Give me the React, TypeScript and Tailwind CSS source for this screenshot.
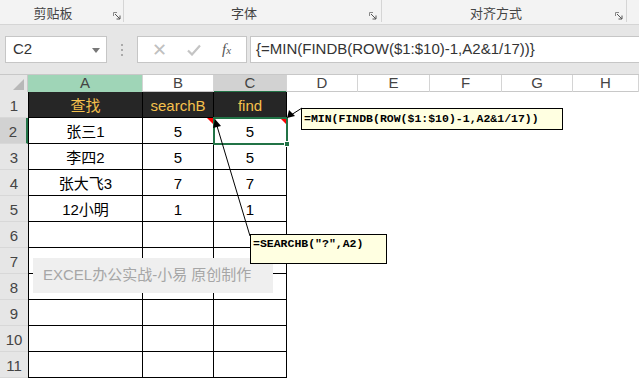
const ROWS = [
  ["查找", "searchB", "find"],
  ["张三1", "5", "5"],
  ["李四2", "5", "5"],
  ["张大飞3", "7", "7"],
  ["12小明", "1", "1"],
  ["", "", ""],
  ["", "", ""],
  ["", "", ""],
  ["", "", ""],
  ["", "", ""],
  ["", "", ""],
];

const COLS = ["A", "B", "C", "D", "E", "F", "G", "H"];

function Launcher() {
  return (
    <svg width="8" height="8" viewBox="0 0 8 8">
      <path d="M0.5 0.5H4M0.5 0.5V4" stroke="#888" strokeWidth="1" fill="none" />
      <path d="M2 2L7 7M7 3.5V7H3.5" stroke="#555" strokeWidth="1" fill="none" />
    </svg>
  );
}

function Ribbon() {
  return (
    <div className="flex h-[25px] border-b border-[#d5d5d5] bg-[#f3f3f3] text-[13px] text-[#444]">
      <div className="flex w-[124px] items-end">
        <div className="w-[106px] pb-px text-center">剪贴板</div>
        <div className="flex w-[17px] pb-[4px] pl-[7px]">
          <Launcher />
        </div>
        <div className="h-[22px] w-px self-start bg-[#d5d5d5]" />
      </div>
      <div className="flex w-[258px] items-end">
        <div className="w-[240px] pb-px text-center">字体</div>
        <div className="flex w-[17px] pb-[4px] pl-[5px]">
          <Launcher />
        </div>
        <div className="h-[22px] w-px self-start bg-[#d5d5d5]" />
      </div>
      <div className="flex w-[245px] items-end">
        <div className="w-[228px] pb-px text-center">对齐方式</div>
        <div className="flex w-[16px] pb-[4px] pl-[5px]">
          <Launcher />
        </div>
        <div className="h-[22px] w-px self-start bg-[#d5d5d5]" />
      </div>
    </div>
  );
}

function FormulaBar() {
  return (
    <div className="flex h-[49px] items-start bg-[#e6e6e6] pt-[11px]">
      <div className="ml-[5px] flex h-[27px] w-[102px] items-center justify-between border border-[#c6c6c6] bg-white pl-[7px] pr-[6px] text-[15px] text-[#333]">
        <span>C2</span>
        <span className="mt-[2px] border-x-[4px] border-t-[5px] border-x-transparent border-t-[#777]" />
      </div>
      <div className="flex w-[30px] flex-col items-center gap-[3px] pt-[8px]">
        <span className="size-[2px] bg-[#aaa]" />
        <span className="size-[2px] bg-[#aaa]" />
        <span className="size-[2px] bg-[#aaa]" />
      </div>
      <div className="flex h-[27px] w-[110px] items-center border border-[#c6c6c6] bg-white text-[#c0c0c0]">
        <span className="ml-[14px] text-[18px] leading-none">✕</span>
        <svg width="14" height="12" viewBox="0 0 14 12" className="ml-[20px]">
          <path d="M1 6.5L5 10.5L13 1.5" stroke="#c4c4c4" strokeWidth="2.2" fill="none" />
        </svg>
        <span className="ml-[21px] font-['Liberation_Serif'] text-[15px] italic text-[#555]">
          f<span className="text-[11px]">x</span>
        </span>
      </div>
      <div className="ml-[3px] flex h-[27px] flex-1 items-center border border-r-0 border-[#c6c6c6] bg-white pl-[5px] text-[15px] text-[#333]">
        {"{=MIN(FINDB(ROW($1:$10)-1,A2&1/17))}"}
      </div>
    </div>
  );
}

function Sheet() {
  const grid = "grid grid-cols-[28px_115px_71px_73px_71px_72px_72px_71px_1fr]";
  return (
    <div>
      <div className={`${grid} h-[18px] border-y border-[#c8c8c8] bg-white text-[15px] leading-[16px] text-[#444]`}>
        <div className="flex items-end justify-end border-r border-[#c8c8c8] bg-[#e6e6e6] pb-[3px] pr-[3px]">
          <svg width="11" height="11">
            <path d="M11 0V11H0Z" fill="#b8b8b8" />
          </svg>
        </div>
        {COLS.map((c) => (
          <div
            key={c}
            className={
              "border-r border-[#d4d4d4] text-center " +
              (c === "A" ? "bg-[#9fd5b7]" : c === "C" ? "border-b-2 border-b-[#217346] bg-[#d2d2d2]" : "")
            }
          >
            {c}
          </div>
        ))}
      </div>
      {ROWS.map((r, i) => (
        <div key={i} className={`${grid} h-[26px] text-[15px] leading-[18px]`}>
          <div
            className={
              "flex items-end justify-center border-b border-[#d8d8d8] pb-[2px] text-[#444] " +
              (i === 1 ? "border-r-2 border-r-[#217346] bg-[#d2d2d2]" : "bg-[#e6e6e6]")
            }
          >
            {i + 1}
          </div>
          {r.map((v, j) => (
            <div
              key={j}
              className={
                "relative flex items-center justify-center border-r border-b border-black pt-[2px] " +
                (j === 0 ? "border-l " : "") +
                (i === 0 ? "bg-[#262626] text-[#f5c14d]" : "bg-white text-black")
              }
            >
              {v}
              {i === 1 && j > 0 && (
                <span className="absolute right-0 top-0 border-l-[6px] border-t-[6px] border-l-transparent border-t-[#ff0000]" />
              )}
            </div>
          ))}
          <div className="col-span-5 bg-white" />
        </div>
      ))}
    </div>
  );
}

export default function App() {
  return (
    <div className="relative h-[379px] w-[639px] overflow-hidden bg-white font-['Liberation_Sans','Noto_Sans_CJK_SC',sans-serif]">
      <Ribbon />
      <FormulaBar />
      <Sheet />

      {/* selected cell C2 */}
      <div className="absolute left-[213px] top-[117px] h-[28px] w-[75px] border-2 border-[#217346]" />
      <div className="absolute left-[284px] top-[141px] size-[6px] border border-white bg-[#217346]" />

      {/* watermark */}
      <div className="absolute left-[33px] top-[258px] flex h-[35px] w-[240px] items-center bg-[#efefef] pl-[10px] text-[15px] text-[#a6a6a6]">
        EXCEL办公实战-小易 原创制作
      </div>

      {/* comment arrows */}
      <svg className="absolute inset-0" width="639" height="379">
        <line x1="302" y1="108" x2="291" y2="115" stroke="black" strokeWidth="1" />
        <path d="M287 118L289 110L295 116Z" fill="black" />
        <line x1="250" y1="236" x2="217" y2="126" stroke="black" strokeWidth="1" />
        <path d="M215 119L213 128L221 126Z" fill="black" />
      </svg>

      {/* comments */}
      <div className="absolute left-[301px] top-[108px] h-[22px] w-[262px] border border-black bg-[#ffffe1] pl-[2px] font-['Liberation_Mono',monospace] text-[11.5px] font-bold leading-[20px] text-black">
        =MIN(FINDB(ROW($1:$10)-1,A2&1/17))
      </div>
      <div className="absolute left-[250px] top-[234px] h-[30px] w-[137px] border border-black bg-[#ffffe1] pl-[2px] font-['Liberation_Mono',monospace] text-[11.5px] font-bold leading-[18px] text-black">
        =SEARCHB("?",A2)
      </div>
    </div>
  );
}
